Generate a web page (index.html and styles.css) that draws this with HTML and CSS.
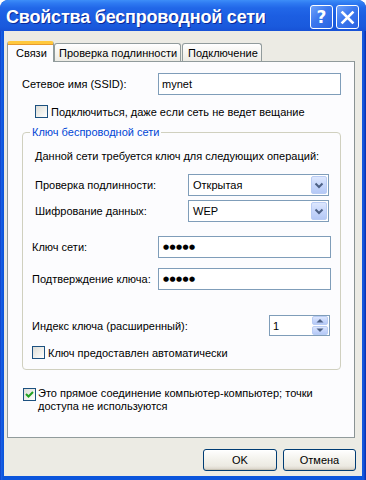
FILE: index.html
```html
<!DOCTYPE html>
<html lang="ru">
<head>
<meta charset="utf-8">
<title>Свойства беспроводной сети</title>
<link rel="stylesheet" href="styles.css">
</head>
<body>
<div class="window">
  <div class="titlebar">
    <span class="title">Свойства беспроводной сети</span>
    <div class="tbtns">
      <span class="tbtn help">?</span>
      <span class="tbtn close"><svg width="15" height="15" viewBox="0 0 15 15"><path d="M2.5 2.5 L12.5 12.5 M12.5 2.5 L2.5 12.5" stroke="#fff" stroke-width="2.6" stroke-linecap="square"/></svg></span>
    </div>
  </div>
  <div class="body">
    <div class="tabs">
      <div class="tab sel">Связи</div>
      <div class="tab t2">Проверка подлинности</div>
      <div class="tab t3">Подключение</div>
    </div>
    <div class="panel">
      <div class="row r-ssid">
        <span class="lbl lbl-ssid">Сетевое имя (SSID):</span>
        <div class="input in-ssid">mynet</div>
      </div>
      <div class="row r-chk1">
        <span class="cb"></span>
        <span class="cbl">Подключиться, даже если сеть не ведет вещание</span>
      </div>
      <div class="group">
        <div class="legend">Ключ беспроводной сети</div>
        <div class="note">Данной сети требуется ключ для следующих операций:</div>
        <div class="row r-combo r-auth">
          <span class="lbl lbl-combo">Проверка подлинности:</span>
          <div class="combo"><span class="val">Открытая</span><span class="drop"><svg width="16" height="18" viewBox="0 0 16 18"><path d="M4.5 7.5 L8 11 L11.5 7.5" fill="none" stroke="#4D6185" stroke-width="2"/></svg></span></div>
        </div>
        <div class="row r-combo r-enc">
          <span class="lbl lbl-combo">Шифрование данных:</span>
          <div class="combo"><span class="val">WEP</span><span class="drop"><svg width="16" height="18" viewBox="0 0 16 18"><path d="M4.5 7.5 L8 11 L11.5 7.5" fill="none" stroke="#4D6185" stroke-width="2"/></svg></span></div>
        </div>
        <div class="row r-key">
          <span class="lbl lbl-key">Ключ сети:</span>
          <div class="input in-key"><span class="dots">●●●●●</span></div>
        </div>
        <div class="row r-key r-confirm">
          <span class="lbl lbl-key">Подтверждение ключа:</span>
          <div class="input in-key"><span class="dots">●●●●●</span></div>
        </div>
        <div class="row r-spin">
          <span class="lbl lbl-spin">Индекс ключа (расширенный):</span>
          <div class="spin">
            <div class="spin-edit">1</div>
            <div class="spin-btns">
              <span class="sbtn"><svg width="16" height="9" viewBox="0 0 16 9"><path d="M4.5 6.5 L8 3 L11.5 6.5 Z" fill="#4D6185"/></svg></span>
              <span class="sbtn"><svg width="16" height="9" viewBox="0 0 16 9"><path d="M4.5 2.5 L8 6 L11.5 2.5 Z" fill="#4D6185"/></svg></span>
            </div>
          </div>
        </div>
        <div class="row r-chk2">
          <span class="cb"></span>
          <span class="cbl">Ключ предоставлен автоматически</span>
        </div>
      </div>
      <div class="row r-adhoc">
        <span class="cb checked"><svg width="11" height="11" viewBox="0 0 11 11"><path d="M2 5 L4.5 7.5 L9 3" fill="none" stroke="#21A121" stroke-width="2"/></svg></span>
        <span class="cbl adhoc-l">Это прямое соединение компьютер-компьютер; точки<br>доступа не используются</span>
      </div>
    </div>
    <div class="buttons">
      <button class="btn btn-ok">OK</button>
      <button class="btn btn-cancel">Отмена</button>
    </div>
  </div>
</div>
</body>
</html>
```
FILE: styles.css
```css
html, body {
  margin: 0;
  padding: 0;
}
body {
  font-family: "Liberation Sans", Arial, sans-serif;
  font-size: 11px;
  color: #000;
  background: #fff;
}
.window {
  width: 366px;
  height: 480px;
  display: flex;
  flex-direction: column;
  background: linear-gradient(90deg, #0A32B8 0, #1D62E6 1px, #0B55DC 3px, #0B55DC 362px, #1A5CE0 363px, #0A3FC4 365px, #082CA8 366px);
  border-radius: 8px 8px 0 0;
  overflow: hidden;
}
.titlebar {
  height: 31px;
  flex: none;
  display: flex;
  align-items: center;
  padding: 0 7px 0 6px;
  background: linear-gradient(180deg, #3D8EF8 0, #2F7BF2 3px, #2167E8 8px, #1C5EE2 16px, #1A5ADD 26px, #1752D6 31px);
  border-radius: 8px 8px 0 0;
  box-sizing: border-box;
}
.title {
  font-family: "Liberation Sans", Arial, sans-serif;
  font-weight: bold;
  font-size: 18px;
  color: #fff;
  text-shadow: 1px 1px 0 #0C2A9A;
  letter-spacing: -0.2px;
  margin-top: 3px;
  white-space: nowrap;
}
.tbtns {
  margin-left: auto;
  display: flex;
  gap: 3px;
  margin-top: 3px;
}
.tbtn {
  width: 23px;
  height: 24px;
  box-sizing: border-box;
  border: 1px solid #fff;
  border-radius: 3px;
  background: linear-gradient(135deg, #6FA2FA 0%, #3C78EE 45%, #2A62E2 100%);
  display: flex;
  align-items: center;
  justify-content: center;
  color: #fff;
}
.help {
  font-family: "DejaVu Sans", sans-serif;
  font-weight: bold;
  font-size: 17px;
  line-height: 1;
}
.body {
  flex: 1;
  margin: 0 4px 4px 4px;
  background: #ECEBE4;
  padding: 10px 6px 5px 3px;
  display: flex;
  flex-direction: column;
}
.tabs {
  display: flex;
  align-items: flex-start;
  height: 21px;
  margin-bottom: -1px;
}
.tab {
  box-sizing: border-box;
  border: 1px solid #919B9C;
  border-bottom: none;
  border-radius: 3px 3px 0 0;
  background: linear-gradient(180deg, #FFFFFF 0%, #F6F5F1 50%, #ECEBE5 100%);
  height: 18px;
  margin-top: 2px;
  display: flex;
  align-items: center;
  padding-top: 1px;
}
.tab.sel {
  position: relative;
  z-index: 1;
  margin-top: 0;
  height: 21px;
  width: 47px;
  background: #FCFCFE;
  border-top: 3px solid #FFC83D;
  box-shadow: inset 0 1px 0 #E79A2E;
  padding-left: 8px;
  padding-top: 0;
}
.t2 {
  width: 127px;
  margin-left: 0;
  padding-left: 4px;
}
.t3 {
  width: 80px;
  margin-left: 1px;
  padding-left: 5px;
}
.panel {
  width: 348px;
  height: 377px;
  box-sizing: border-box;
  border: 1px solid #919B9C;
  border-right-color: #8A9394;
  background: #FCFCFE;
  padding: 0 13px 0 14px;
  display: flex;
  flex-direction: column;
}
.row {
  display: flex;
  align-items: center;
  flex: none;
}
.lbl {
  white-space: nowrap;
  flex: none;
}
.input {
  box-sizing: border-box;
  height: 22px;
  border: 1px solid #7F9DB9;
  background: #fff;
  display: flex;
  align-items: center;
  padding-left: 3px;
}
.r-ssid {
  margin-top: 11px;
  height: 22px;
}
.lbl-ssid {
  width: 136px;
}
.in-ssid {
  width: 183px;
}
.r-chk1 {
  margin-top: 10px;
  height: 13px;
  padding-left: 13px;
}
.cb {
  box-sizing: border-box;
  width: 13px;
  height: 13px;
  flex: none;
  border: 1px solid #1C5180;
  background: linear-gradient(135deg, #DCDCD7 0%, #F0F0EC 55%, #FFFFFF 100%);
  display: flex;
  align-items: center;
  justify-content: center;
}
.cbl {
  margin-left: 3px;
  white-space: nowrap;
}
.group {
  margin-top: 14px;
  width: 319px;
  height: 238px;
  box-sizing: border-box;
  border: 1px solid #D0D0BF;
  border-radius: 4px;
  display: flex;
  flex-direction: column;
  flex: none;
}
.legend {
  margin-top: -7px;
  margin-left: 7px;
  padding: 0 2px;
  line-height: 13px;
  height: 13px;
  align-self: flex-start;
  background: #FCFCFE;
  color: #0046D5;
}
.note {
  margin-top: 11px;
  margin-left: 12px;
  line-height: 13px;
}
.r-combo {
  height: 22px;
  margin-left: 12px;
}
.r-auth {
  margin-top: 11px;
}
.r-enc {
  margin-top: 4px;
}
.lbl-combo {
  width: 153px;
}
.combo {
  box-sizing: border-box;
  width: 141px;
  height: 22px;
  border: 1px solid #7F9DB9;
  background: #fff;
  display: flex;
  align-items: center;
  padding: 1px;
}
.val {
  flex: 1;
  padding-left: 3px;
}
.drop {
  box-sizing: border-box;
  width: 16px;
  height: 18px;
  border: 1px solid #B9CCF4;
  border-radius: 2px;
  background: linear-gradient(180deg, #DDE7FD 0%, #C6D6FB 50%, #B5C9F6 100%);
  display: flex;
}
.drop svg {
  margin: -1px;
}
.r-key {
  height: 22px;
  margin-left: 9px;
  margin-top: 14px;
}
.r-confirm {
  margin-top: 10px;
}
.lbl-key {
  width: 126px;
}
.in-key {
  width: 173px;
}
.dots {
  font-family: "DejaVu Sans", sans-serif;
  font-size: 7px;
  letter-spacing: 0.4px;
  padding-left: 1px;
}
.r-spin {
  height: 21px;
  margin-left: 9px;
  margin-top: 25px;
}
.lbl-spin {
  width: 237px;
}
.spin {
  display: flex;
  height: 21px;
}
.spin-edit {
  box-sizing: border-box;
  width: 43px;
  height: 21px;
  border: 1px solid #7F9DB9;
  border-right: none;
  background: #fff;
  padding-left: 3px;
  display: flex;
  align-items: center;
}
.spin-btns {
  box-sizing: border-box;
  width: 18px;
  height: 21px;
  border: 1px solid #7F9DB9;
  border-left: none;
  background: #fff;
  display: flex;
  flex-direction: column;
  justify-content: space-between;
  padding: 0 1px 0 0;
}
.sbtn {
  box-sizing: border-box;
  height: 9px;
  width: 16px;
  border: 1px solid #B9CCF4;
  border-radius: 2px;
  background: linear-gradient(180deg, #DDE7FD 0%, #C6D6FB 50%, #B5C9F6 100%);
  display: flex;
}
.sbtn svg {
  margin: -1px;
}
.r-chk2 {
  height: 13px;
  margin-left: 9px;
  margin-top: 10px;
}
.r-adhoc {
  margin-top: 18px;
  align-items: flex-start;
  padding-left: 1px;
}
.checked {
  background: linear-gradient(135deg, #DCDCD7 0%, #F0F0EC 55%, #FFFFFF 100%);
}
.adhoc-l {
  margin-left: 2px;
  margin-top: -1px;
  line-height: 13px;
}
.buttons {
  display: flex;
  justify-content: flex-end;
  gap: 6px;
  margin-top: 11px;
}
.btn {
  box-sizing: border-box;
  height: 22px;
  width: 74px;
  border: 1px solid #003C74;
  border-radius: 3px;
  background: linear-gradient(180deg, #FFFFFF 0%, #F5F4EF 40%, #ECEAE2 80%, #D6D0C5 100%);
  box-shadow: inset 0 -1px 0 #C9C4B6, inset 0 1px 0 #fff;
  font-family: "Liberation Sans", Arial, sans-serif;
  font-size: 11px;
  color: #000;
  padding: 0;
  margin: 0;
}
.btn-cancel {
  width: 73px;
}
```
